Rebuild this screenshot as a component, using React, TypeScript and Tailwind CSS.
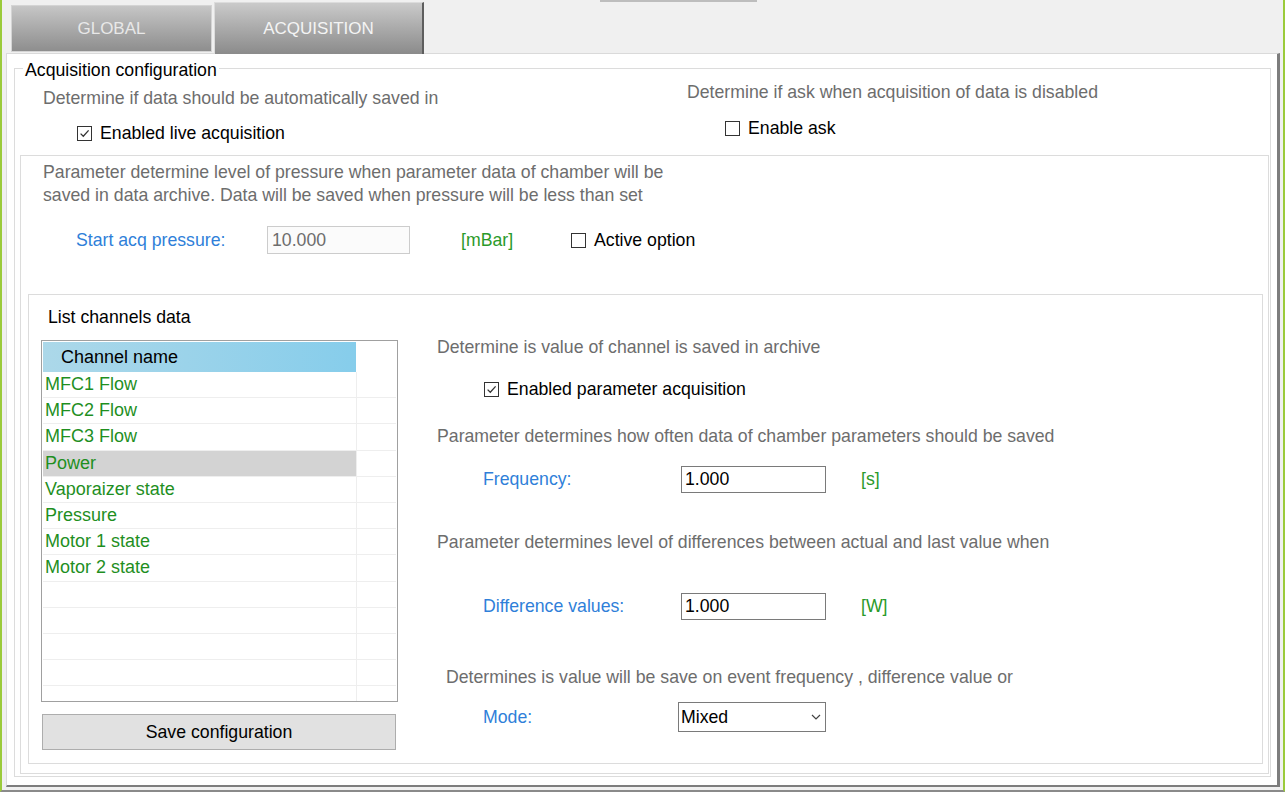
import React from 'react';

const channels = [
  'MFC1 Flow',
  'MFC2 Flow',
  'MFC3 Flow',
  'Power',
  'Vaporaizer state',
  'Pressure',
  'Motor 1 state',
  'Motor 2 state',
  '',
  '',
  '',
  '',
  '',
];

function CheckBox({ checked, label }: { checked?: boolean; label: string }) {
  return (
    <div className="flex items-center h-[20px]">
      <span className="w-[15px] h-[15px] border border-[#333333] bg-white flex items-center justify-center">
        {checked && (
          <svg width="11" height="11" viewBox="0 0 11 11">
            <path d="M1.6 5.6 L4.3 8.3 L9.6 2.4" stroke="#333333" strokeWidth="1.3" fill="none" />
          </svg>
        )}
      </span>
      <span className="ml-[8px] text-[17.7px] text-black whitespace-nowrap">{label}</span>
    </div>
  );
}

function Desc({ children }: { children: React.ReactNode }) {
  return <div className="text-[17.7px] leading-[20px] text-[#6d6d6d] whitespace-nowrap">{children}</div>;
}

function Field({ label, value, unit }: { label: string; value: string; unit: string }) {
  return (
    <div className="flex items-center h-[27px] pl-[46px]">
      <span className="w-[198px] text-[17.7px] text-[#2f7fd9]">{label}</span>
      <div className="w-[145px] h-[27px] border border-[#7a7a7a] bg-white flex items-center pl-[3px] text-[17.7px] text-black">
        {value}
      </div>
      <span className="ml-[35px] text-[17.7px] text-[#2a9a2a]">{unit}</span>
    </div>
  );
}

export default function App() {
  return (
    <div className="w-[1285px] h-[792px] bg-[#f0f0f0] border-l-2 border-r-2 border-l-[#9bcb3b] border-r-[#9bcb3b] border-b-2 border-b-[#8a8a8a] flex flex-col overflow-hidden font-['Liberation_Sans',Arial,sans-serif]">
      {/* tab strip */}
      <div className="relative h-[53px] flex items-end pl-[9px] shrink-0">
        <div className="absolute top-0 left-[598px] w-[157px] h-[2px] bg-[#bdbdbd]" />
        <div className="w-[201px] h-[47px] mb-[1px] bg-gradient-to-b from-[#c6c6c6] to-[#8e8e8e] border border-[#d4d4d4] flex items-center justify-center text-[17px] text-[#e8e8e8]">
          GLOBAL
        </div>
        <div className="relative z-10 ml-[2px] w-[210px] h-[52px] mb-[-1px] bg-gradient-to-b from-[#cacaca] to-[#8b8b8b] border-l border-t border-[#dcdcdc] border-r-2 border-r-[#5e5e5e] flex items-center justify-center text-[17px] text-[#f4f4f4]">
          ACQUISITION
        </div>
      </div>

      {/* tab page */}
      <div className="flex-1 ml-[4px] mr-[3px] mb-[3px] bg-white border-t border-l border-[#dadada] border-r-[3px] border-r-[#7d7d7d] border-b-2 border-b-[#7d7d7d] flex flex-col">
        {/* group box */}
        <div className="relative flex-1 ml-[7px] mr-[6px] mt-[14px] mb-[8px] border border-[#dcdcdc] flex flex-col">
          <span className="absolute top-[-9px] left-[8px] bg-white px-[2px] text-[17.7px] leading-[20px] text-black">
            Acquisition configuration
          </span>

          <div className="h-[86px] flex shrink-0">
            <div className="w-[672px] pl-[28px] pt-[19px]">
              <Desc>Determine if data should be automatically saved in</Desc>
              <div className="mt-[15px] pl-[34px]">
                <CheckBox checked label="Enabled live acquisition" />
              </div>
            </div>
            <div className="pt-[13px]">
              <Desc>Determine if ask when acquisition of data is disabled</Desc>
              <div className="mt-[16px] pl-[38px]">
                <CheckBox label="Enable ask" />
              </div>
            </div>
          </div>

          {/* pressure panel */}
          <div className="flex-1 ml-[5px] mr-[1px] mb-[2px] border border-[#dcdcdc] flex flex-col">
            <div className="pl-[22px] pt-[5px] text-[17.7px] leading-[23px] text-[#6d6d6d] whitespace-nowrap">
              <div>Parameter determine level of pressure when parameter data of chamber will be</div>
              <div>saved in data archive. Data will be saved when pressure will be less than set</div>
            </div>
            <div className="mt-[19px] h-[28px] flex items-center pl-[55px]">
              <span className="w-[191px] text-[17.7px] text-[#2f7fd9]">Start acq pressure:</span>
              <div className="w-[143px] h-[28px] border border-[#cccccc] bg-[#fbfbfb] flex items-center pl-[4px] text-[17.7px] text-[#6d6d6d]">
                10.000
              </div>
              <span className="ml-[51px] w-[110px] text-[17.7px] text-[#2a9a2a]">[mBar]</span>
              <CheckBox label="Active option" />
            </div>

            {/* channels panel */}
            <div className="flex-1 mt-[40px] ml-[7px] mr-[5px] mb-[9px] border border-[#dcdcdc] flex">
              <div className="w-[391px] pl-[12px] shrink-0">
                <div className="pl-[7px] pt-[12px] text-[17.7px] leading-[20px] text-black">List channels data</div>
                <div className="mt-[13px] w-[357px] h-[362px] border border-[#a0a0a0] p-[1px] overflow-hidden bg-white">
                  <div className="flex h-[30px]">
                    <div className="w-[313px] h-[30px] bg-gradient-to-r from-[#acd8e9] to-[#86cdeb] flex items-center pl-[18px] text-[18px] text-black">
                      Channel name
                    </div>
                  </div>
                  {channels.map((c, i) => (
                    <div key={i} className="flex h-[26.2px] border-b border-[#eeeeee]">
                      <div
                        className={
                          'w-[313px] flex items-center pl-[2px] text-[18px] text-[#1f8f1f] ' +
                          (c === 'Power' ? 'bg-[#d3d3d3]' : '')
                        }
                      >
                        {c}
                      </div>
                      <div className="w-[1px] bg-[#eeeeee]" />
                    </div>
                  ))}
                </div>
                <button className="mt-[12px] ml-[1px] w-[354px] h-[36px] bg-[#e1e1e1] border border-[#adadad] text-[17.7px] text-black">
                  Save configuration
                </button>
              </div>

              <div className="flex-1 pl-[17px] pt-[42px] flex flex-col">
                <Desc>Determine is value of channel is saved in archive</Desc>
                <div className="mt-[22px] pl-[47px]">
                  <CheckBox checked label="Enabled parameter acquisition" />
                </div>
                <div className="mt-[27px]">
                  <Desc>Parameter determines how often data of chamber parameters should be saved</Desc>
                </div>
                <div className="mt-[20px]">
                  <Field label="Frequency:" value="1.000" unit="[s]" />
                </div>
                <div className="mt-[39px]">
                  <Desc>Parameter determines level of differences between actual and last value when</Desc>
                </div>
                <div className="mt-[41px]">
                  <Field label="Difference values:" value="1.000" unit="[W]" />
                </div>
                <div className="mt-[47px] pl-[9px]">
                  <Desc>Determines is value will be save on event frequency , difference value or</Desc>
                </div>
                <div className="mt-[15px] flex items-center h-[30px] pl-[46px]">
                  <span className="w-[195px] text-[17.7px] text-[#2f7fd9]">Mode:</span>
                  <div className="w-[148px] h-[30px] border border-[#7a7a7a] bg-white flex items-center justify-between pl-[2px] pr-[4px] text-[17.7px] text-black">
                    <span>Mixed</span>
                    <svg width="10" height="6" viewBox="0 0 10 6">
                      <path d="M1 1 L5 5 L9 1" stroke="#444444" strokeWidth="1.2" fill="none" />
                    </svg>
                  </div>
                </div>
              </div>
            </div>
          </div>
        </div>
      </div>
    </div>
  );
}
